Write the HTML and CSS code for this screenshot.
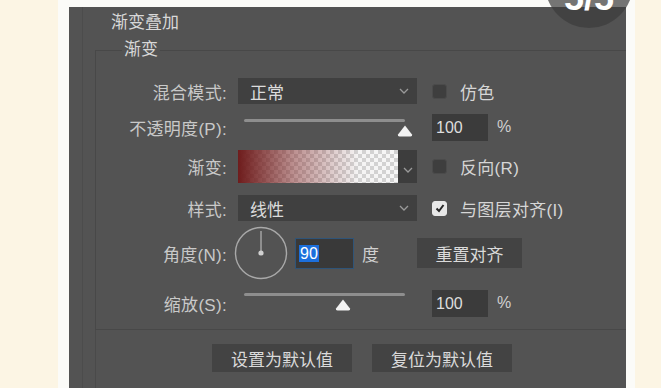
FILE: index.html
```html
<!DOCTYPE html>
<html lang="zh-CN">
<head>
<meta charset="utf-8">
<title>渐变叠加</title>
<link rel="stylesheet" href="styles.css">
</head>
<body>
<div class="frame">
  <main class="panel">
    <h1 class="title">渐变叠加</h1>
    <fieldset class="group">
      <legend class="legend">渐变</legend>
      <div class="form">
        <label class="lbl">混合模式:</label>
        <div class="select"><span>正常</span><svg class="chev" viewBox="0 0 10 6" width="10" height="6"><polyline points="1,1 5,5 9,1"/></svg></div>
        <div class="extra"><span class="box"></span><span class="opt">仿色</span></div>

        <label class="lbl">不透明度(P):</label>
        <div class="slider"><div class="track"><svg class="thumb" style="left:100%" viewBox="0 0 16 12" width="16" height="12"><path d="M8 0.5 L15 9.5 Q15.6 11.5 13.5 11.5 L2.5 11.5 Q0.4 11.5 1 9.5 Z"/></svg></div></div>
        <div class="extra"><div class="num">100</div><span class="unit">%</span></div>

        <label class="lbl">渐变:</label>
        <div class="gpick"><div class="swatch"></div><div class="garrow"><svg class="chev" viewBox="0 0 10 6" width="10" height="6"><polyline points="1,1 5,5 9,1"/></svg></div></div>
        <div class="extra"><span class="box"></span><span class="opt">反向(R)</span></div>

        <label class="lbl">样式:</label>
        <div class="select"><span>线性</span><svg class="chev" viewBox="0 0 10 6" width="10" height="6"><polyline points="1,1 5,5 9,1"/></svg></div>
        <div class="extra"><span class="box checked"><svg viewBox="0 0 12 12" width="12" height="12"><polyline points="2.5,6.5 5,9 9.5,3"/></svg></span><span class="opt">与图层对齐(I)</span></div>

        <label class="lbl">角度(N):</label>
        <div class="angle">
          <svg class="dial" viewBox="0 0 54 54" width="54" height="54"><circle cx="27" cy="27" r="25.5"/><line x1="27" y1="27" x2="27" y2="5"/><circle class="dot" cx="27" cy="27" r="2.6"/></svg>
          <div class="num deg"><span class="sel">90</span></div>
          <span class="unit">度</span>
          <button class="btn reset">重置对齐</button>
        </div>

        <label class="lbl">缩放(S):</label>
        <div class="slider low"><div class="track"><svg class="thumb" style="left:61.5%" viewBox="0 0 16 12" width="16" height="12"><path d="M8 0.5 L15 9.5 Q15.6 11.5 13.5 11.5 L2.5 11.5 Q0.4 11.5 1 9.5 Z"/></svg></div></div>
        <div class="extra"><div class="num">100</div><span class="unit">%</span></div>
      </div>
    </fieldset>
    <div class="defaults">
      <button class="btn wide">设置为默认值</button>
      <button class="btn wide">复位为默认值</button>
    </div>
  </main>
</div>
<div class="badge">5/5</div>
</body>
</html>
```

FILE: styles.css
```css
html, body {
  margin: 0;
  padding: 0;
}
body {
  width: 661px;
  height: 388px;
  overflow: hidden;
  background: #fcf5e4;
  font-family: "Liberation Sans", "Noto Sans CJK SC", sans-serif;
  position: relative;
}
.frame {
  margin-left: 58px;
  width: 577px;
  height: 388px;
  box-sizing: border-box;
  padding: 7px 9px 0 11px;
  background: #fbfbf8;
}
.panel {
  display: block;
  height: 381px;
  background-color: #535353;
  background-image: linear-gradient(90deg, transparent 13px, #4c4c4c 13px, #4c4c4c 14px, transparent 14px);
  overflow: hidden;
  color: #cfcfcf;
}
.title {
  margin: 0;
  padding: 6px 0 0 42px;
  font-size: 17px;
  line-height: 20px;
  font-weight: normal;
  color: #d8d8d8;
}
.group {
  margin: 7px -10px 0 26px;
  padding: 13px 0 0 0;
  min-width: 0;
  border: 1px solid #484848;
  border-right: none;
}
.legend {
  margin-left: 26px;
  padding: 0 2px;
  font-size: 17px;
  line-height: 20px;
  color: #d8d8d8;
}
.form {
  display: grid;
  grid-template-columns: 131px 179px 1fr;
  grid-template-rows: 36px 36px 42px 42px 48px 52px;
  column-gap: 11px;
  align-items: center;
}
.lbl {
  justify-self: end;
  font-size: 17px;
  color: #c9c9c9;
  white-space: nowrap;
  letter-spacing: 0.3px;
}
.select {
  height: 26px;
  background: #404040;
  display: flex;
  align-items: center;
  justify-content: space-between;
  padding: 0 8px 0 12px;
  font-size: 17px;
  color: #dcdcdc;
}
.chev {
  fill: none;
  stroke: #9a9a9a;
  stroke-width: 1.3;
}
.extra {
  margin-left: 4px;
  display: flex;
  align-items: center;
}
.box {
  width: 15px;
  height: 15px;
  box-sizing: border-box;
  border: 1px solid #4b4b4b;
  background: #3e3e3e;
  border-radius: 3px;
  margin-right: 13px;
  display: flex;
  align-items: center;
  justify-content: center;
}
.box.checked {
  background: #e8e8e8;
  border-color: #e8e8e8;
}
.box.checked svg {
  fill: none;
  stroke: #262626;
  stroke-width: 2;
}
.opt {
  font-size: 17px;
  color: #d6d6d6;
  white-space: nowrap;
  letter-spacing: 0.3px;
}
.slider {
  height: 20px;
}
.slider.low {
  margin-top: -4px;
}
.track {
  position: relative;
  margin: 2px 0 0 6px;
  width: 161px;
  height: 3px;
  background: #8e8e8e;
  border-radius: 2px;
}
.thumb {
  position: absolute;
  top: 6px;
  transform: translateX(-50%);
  fill: #f2f2f2;
}
.num {
  width: 56px;
  height: 27px;
  box-sizing: border-box;
  background: #3b3b3b;
  padding-left: 4px;
  font-size: 16px;
  line-height: 27px;
  color: #dedede;
}
.unit {
  margin-left: 9px;
  font-size: 16px;
  color: #d0d0d0;
}
.gpick {
  height: 33px;
  display: flex;
}
.swatch {
  width: 160px;
  background:
    linear-gradient(90deg, rgba(110, 28, 28, 1) 0%, rgba(140, 60, 60, 0.55) 35%, rgba(220, 210, 210, 0.1) 75%, rgba(255, 255, 255, 0) 100%),
    conic-gradient(#d2d2d2 25%, #f7f7f7 0 50%, #d2d2d2 0 75%, #f7f7f7 0) 0 0 / 8px 8px;
}
.garrow {
  flex: 1;
  background: #3d3d3d;
  display: flex;
  align-items: center;
  justify-content: center;
  padding-top: 8px;
}
.angle {
  grid-column: 2 / 4;
  display: flex;
  align-items: center;
  margin-left: -4px;
}
.dial {
  fill: none;
  stroke: #a9a9a9;
  stroke-width: 1.4;
}
.dial .dot {
  fill: #d0d0d0;
  stroke: none;
}
.num.deg {
  margin-left: 7px;
  width: 59px;
  height: 31px;
  border: 1px solid #2f5478;
  background: #393939;
  padding-left: 3px;
  line-height: 29px;
}
.sel {
  display: inline-block;
  background: #1c6fdc;
  color: #ffffff;
  line-height: 17px;
  padding: 0 1px;
}
.angle .unit {
  margin-left: 8px;
  font-size: 17px;
}
.btn {
  border: none;
  margin: 0;
  font-family: inherit;
  font-size: 17px;
  color: #dadada;
  background: #434343;
  padding: 0;
}
.reset {
  width: 105px;
  height: 30px;
  margin-left: 38px;
}
.defaults {
  margin-left: 26px;
  height: 60px;
  border-left: 1px solid #4a4a4a;
  display: flex;
  gap: 20px;
  padding: 14px 0 0 116px;
  box-sizing: border-box;
  align-items: flex-start;
}
.btn.wide {
  width: 140px;
  height: 28px;
}
.badge {
  position: absolute;
  left: 545px;
  top: -60px;
  width: 88px;
  height: 88px;
  border-radius: 50%;
  background: rgba(60, 60, 60, 0.7);
  display: flex;
  align-items: flex-end;
  justify-content: center;
  box-sizing: border-box;
  padding-bottom: 12px;
  color: #ffffff;
  font-size: 36px;
  line-height: 36px;
  font-weight: bold;
}
```
